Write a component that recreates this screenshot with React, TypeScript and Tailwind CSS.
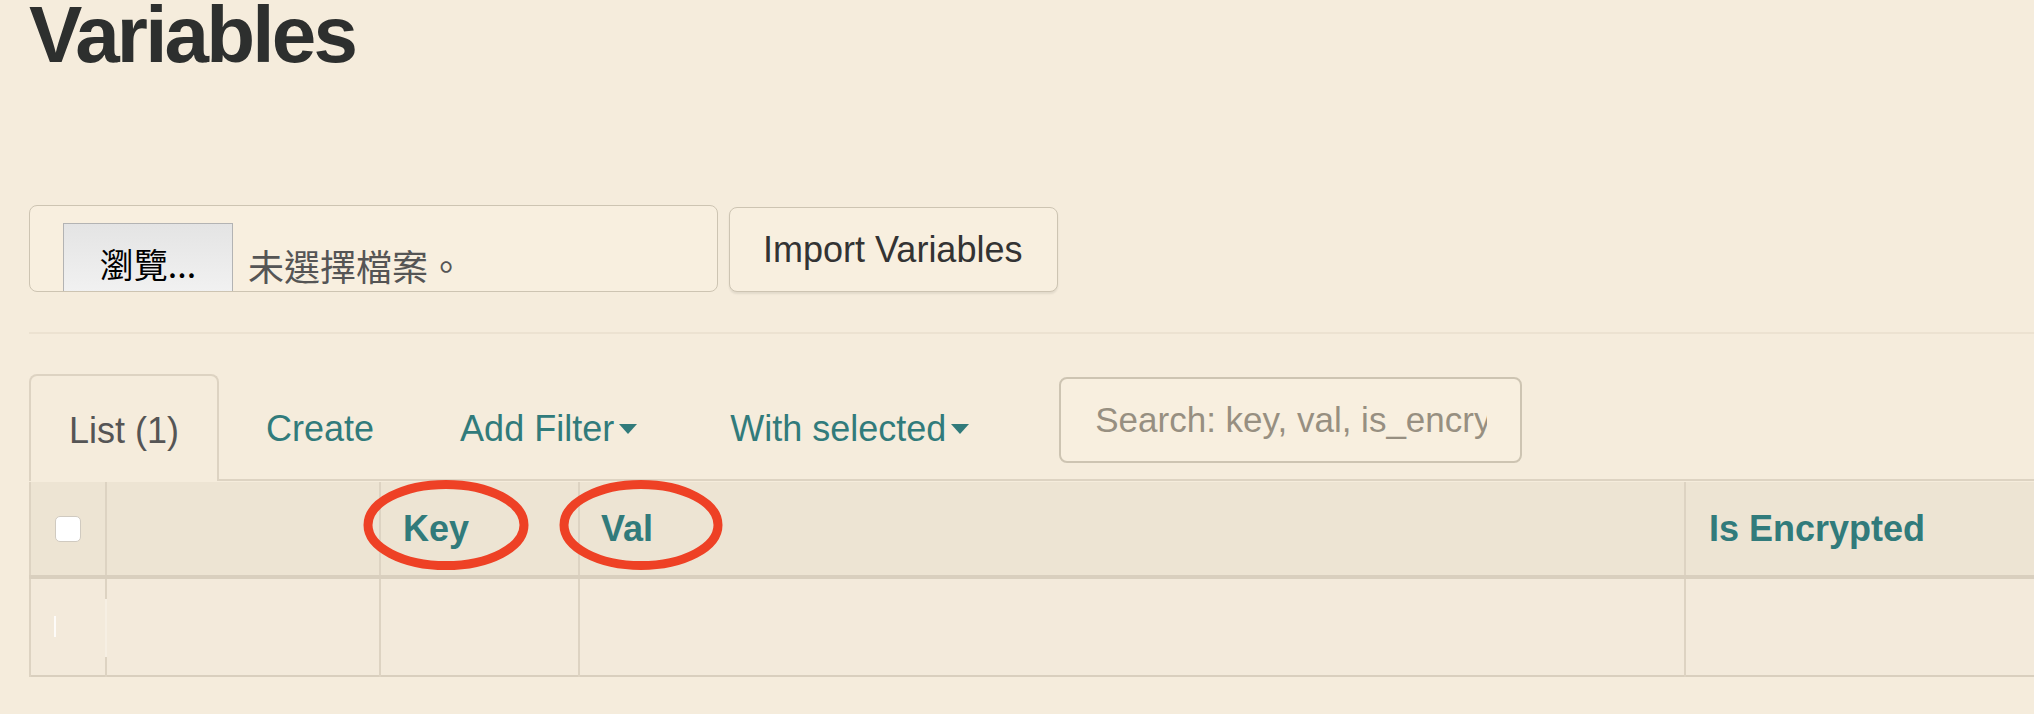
import React from "react";

const latin = "font-['Liberation_Sans','Noto_Sans_CJK_TC',sans-serif]";

function Caret() {
  return (
    <span className="inline-block ml-[5px] align-middle w-0 h-0 border-l-[9px] border-r-[9px] border-t-[10px] border-l-transparent border-r-transparent border-t-[#317b7b]" />
  );
}

export default function App() {
  return (
    <div className={`relative min-h-screen w-[2034px] overflow-hidden bg-[#f5ecdc] pl-[29px] ${latin}`}>
      {/* ── Title ───────────────────────── */}
      <h1 className="pt-[1px] text-[80px] leading-[68px] font-bold tracking-[-0.035em] text-[#2d2f2e]">Variables</h1>

      {/* ── Import form ─────────────────── */}
      <div className="mt-[136px] flex items-end gap-[11px]">
        <div className="h-[87px] w-[689px] overflow-hidden rounded-[8px] border border-[#cdc4b2] bg-[#f8efdf] pl-[33px] pt-[17px] flex items-start">
          <div className="h-[80px] w-[170px] shrink-0 flex items-center justify-center border border-[#b3b3b3] bg-gradient-to-b from-[#e4e4e4] to-[#f3f3f3] text-[34px] text-black font-['Noto_Sans_CJK_TC',sans-serif]">
            瀏覽...
          </div>
          <div className="h-[84px] ml-[15px] flex items-center text-[36px] text-[#555] font-['Noto_Sans_CJK_TC',sans-serif]">
            未選擇檔案。
          </div>
        </div>
        <button className="h-[85px] w-[329px] rounded-[8px] border border-[#cdc4b2] bg-[#f8efdf] pl-[33px] text-left text-[36px] text-[#333] shadow-[0_2px_2px_rgba(0,0,0,0.08)]">
          Import Variables
        </button>
      </div>

      <hr className="mt-[40px] border-0 border-t-2 border-[#ece2d1]" />

      {/* ── Tabs ────────────────────────── */}
      <ul className="mt-[40px] flex items-start border-b-2 border-[#ddd3c2] text-[36px]">
        <li className="-mb-[2px] h-[107px] flex items-center pt-[4px] px-[38px] rounded-t-[8px] border-2 border-b-0 border-[#ddd3c2] bg-[#f5ecdc] text-[#555]">
          List (1)
        </li>
        <li className="h-[105px] flex items-center pt-[4px] ml-[5px] px-[42px] text-[#317b7b]">Create</li>
        <li className="h-[105px] flex items-center pt-[4px] px-[44px] text-[#317b7b]">
          Add Filter
          <Caret />
        </li>
        <li className="h-[105px] flex items-center pt-[4px] pl-[49px] pr-[44px] text-[#317b7b]">
          With selected
          <Caret />
        </li>
        <li className="ml-[46px] mt-[3px]">
          <input
            readOnly
            placeholder="Search: key, val, is_encrypted"
            className="h-[86px] w-[463px] rounded-[8px] border-2 border-[#cdc4b2] bg-[#f8efdf] pl-[34px] pr-[33px] text-[35px] text-[#333] placeholder:text-[#978f81] outline-none"
          />
        </li>
      </ul>

      {/* ── Table ───────────────────────── */}
      <table className="table-fixed border-collapse w-[2255px] mt-[1px]">
        <colgroup>
          <col className="w-[76px]" />
          <col className="w-[274px]" />
          <col className="w-[199px]" />
          <col className="w-[1106px]" />
          <col className="w-[600px]" />
        </colgroup>
        <thead>
          <tr className="h-[95px] bg-[#ede4d3] border-b-4 border-[#d9cfbe] text-[36px] font-bold text-[#317b7b] text-left">
            <th className="border-2 border-t-0 border-b-0 border-[#ddd3c2]">
              <div className="mx-auto h-[26px] w-[26px] rounded-[5px] border border-[#d0cac0] bg-white" />
            </th>
            <th className="border-r-2 border-[#ddd3c2]" />
            <th className="border-r-2 border-[#ddd3c2] pl-[22px] font-bold">Key</th>
            <th className="border-r-2 border-[#ddd3c2] pl-[21px] font-bold">Val</th>
            <th className="pl-[23px] font-bold">Is Encrypted</th>
          </tr>
        </thead>
        <tbody>
          <tr className="h-[99px] bg-[#f3eadb] border-b-2 border-[#d9cfbe]">
            <td className="relative border-l-2 border-r-2 border-[#ddd3c2]">
              <span className="absolute left-[23px] top-[37px] h-[21px] w-[2px] bg-white/80" />
              <span className="absolute right-[-2px] top-[20px] h-[58px] w-[2px] bg-[#f6efe3]" />
            </td>
            <td className="border-r-2 border-[#ddd3c2]" />
            <td className="border-r-2 border-[#ddd3c2]" />
            <td className="border-r-2 border-[#ddd3c2]" />
            <td />
          </tr>
        </tbody>
      </table>

      {/* ── Annotation overlay ──────────── */}
      <svg className="pointer-events-none absolute left-0 top-0" width="2034" height="714">
        <ellipse cx="446" cy="525" rx="78" ry="40.5" fill="none" stroke="#ee4125" strokeWidth="9" />
        <ellipse cx="641" cy="525" rx="77" ry="40.5" fill="none" stroke="#ee4125" strokeWidth="9" />
      </svg>
    </div>
  );
}
